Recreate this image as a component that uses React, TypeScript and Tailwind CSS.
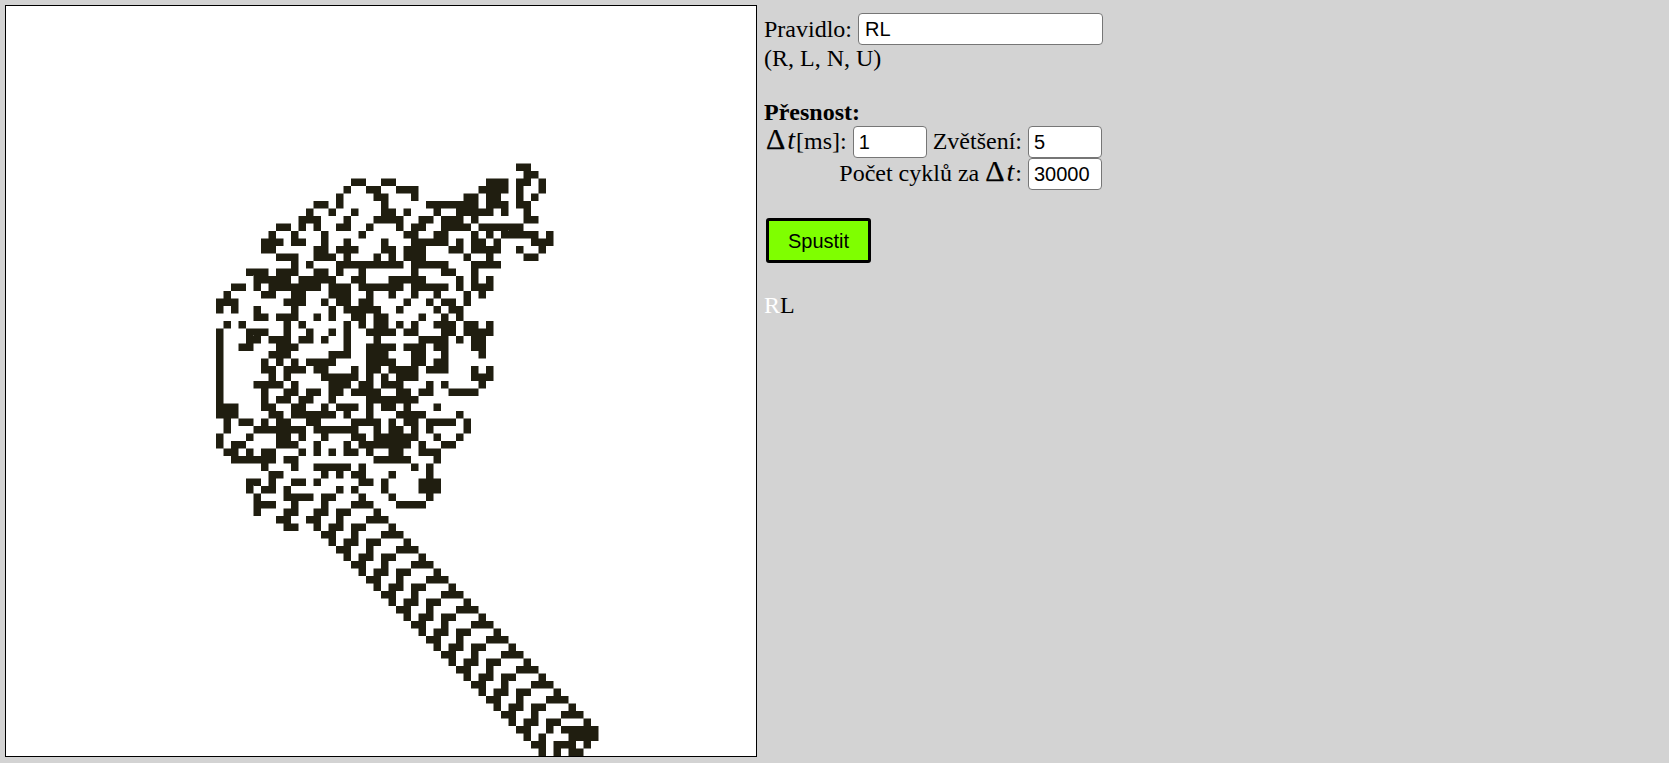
import React from 'react';

const serif = 'font-["Liberation_Serif",serif]';

// langton's ant, rule RL, on a 100x100 board. stops when it walks off the board
function runAnt() {
  const size = 100;
  const cells = new Uint8Array(size * size);
  let x = 50;
  let y = 50;
  let dir = 3;
  const dx = [0, 1, 0, -1];
  const dy = [-1, 0, 1, 0];
  while (x >= 0 && y >= 0 && x < size && y < size) {
    const i = y * size + x;
    dir = (dir + (cells[i] ? 3 : 1)) % 4;
    cells[i] ^= 1;
    x += dx[dir];
    y += dy[dir];
  }
  let d = '';
  for (let r = 0; r < size; r++) {
    for (let c = 0; c < size; c++) {
      if (cells[r * size + c]) d += `M${c} ${r}h1v1h-1z`;
    }
  }
  return d;
}

const antPath = runAnt();

const Field = ({value, className}: {value: string; className: string}) => (
  <input
    readOnly
    value={value}
    className={`h-[31.5px] bg-white border-[1.5px] border-[#767676] rounded-[4px] text-[20px] text-black font-["Liberation_Sans",sans-serif] outline-none ${className}`}
  />
);

const Delta = () => (
  <span className="whitespace-nowrap mr-[1px]">
    <span className="text-[30px] leading-none [-webkit-text-stroke:0.25px_black]">Δ</span>
    <i className="text-[28px] leading-none ml-[2px]">t</i>
  </span>
);

export default function App() {
  return (
    <div className={`min-h-[763px] bg-[#d3d3d3] flex items-start text-[24px] text-black ${serif}`}>
      <div className="mt-[5px] ml-[5px] w-[752px] h-[752px] border border-black bg-white shrink-0">
        <svg viewBox="0 0 100 100" className="block w-full h-full">
          <path d={antPath} fill="#201e10" />
        </svg>
      </div>
      <div className="ml-[7px] w-[340px] pt-[11px]">
        <div className="flex items-center gap-[6px]">
          <span>Pravidlo:</span>
          <Field value="RL" className="w-[245px] px-[6px]" />
        </div>
        <div className="h-[26px] leading-[22px]">(R, L, N, U)</div>
        <div className="h-[27px]" />
        <div className="h-[26px] leading-[25px] font-bold">Přesnost:</div>
        <div className="flex flex-col items-end w-[338px]">
          <div className="flex items-center h-[32px]">
            <span className="pb-[2px]"><Delta />[ms]:</span>
            <Field value="1" className="w-[74px] ml-[6px] px-[5px]" />
            <span className="ml-[6px] pb-[2px]">Zvětšení:</span>
            <Field value="5" className="w-[74px] ml-[6px] px-[5px]" />
          </div>
          <div className="flex items-center h-[32px]">
            <span className="pb-[2px]">Počet cyklů za <Delta />:</span>
            <Field value="30000" className="w-[74px] ml-[6px] px-[5px]" />
          </div>
        </div>
        <button className={`block mt-[28px] ml-[2px] w-[105px] h-[45px] bg-[#7fff00] border-[3px] border-black rounded-[3px] text-[20px] text-black font-["Liberation_Sans",sans-serif]`}>
          Spustit
        </button>
        <div className="mt-[28px] leading-[28px]">
          <span className="text-white">R</span>
          <span>L</span>
        </div>
      </div>
    </div>
  );
}
